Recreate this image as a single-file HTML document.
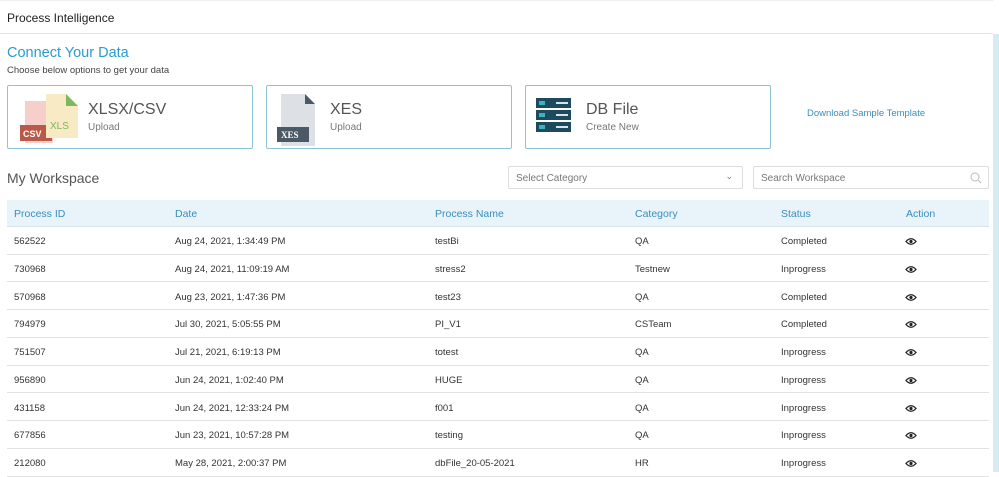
<!DOCTYPE html>
<html><head><style>
*{margin:0;padding:0;box-sizing:border-box}
body{width:999px;height:472px;overflow:hidden;background:#fff;font-family:"Liberation Sans",sans-serif;position:relative;color:#333}
.top{position:absolute;left:0;top:0;width:993px;height:34px;border-bottom:1px solid #e3e6ea;border-top:1px solid #eee}
.top span{position:absolute;left:7px;top:10px;font-size:12px;color:#222}
.sb{position:absolute;left:993px;top:34px;width:6px;height:438px;background:#d6ebf3}
.h1{position:absolute;left:7px;top:45px;font-size:14.5px;color:#2c9ccf}
.sub{position:absolute;left:7px;top:65px;font-size:9.5px;color:#444}
.card{position:absolute;top:85px;width:246px;height:64px;border:1px solid #8cc3d6;border-radius:2px}
.card .t{position:absolute;top:15px;font-size:16px;color:#555}
.card .s{position:absolute;top:36px;font-size:10px;color:#777}
.dl{position:absolute;left:807px;top:108px;font-size:9.5px;color:#3a8dbb}
.ws{position:absolute;left:7px;top:170px;font-size:14px;color:#555}
.inp{position:absolute;top:166px;height:23px;border:1px solid #ddd;border-radius:2px;font-size:10px;color:#777;padding:6px 7px}
.thead{position:absolute;left:7px;top:200px;width:982px;height:27px;background:#e8f4fa;border-bottom:1px solid #d5e6ee}
.c{position:absolute;font-size:10.5px}
.thead .c{top:8px;color:#3a8dbb}
.row{position:absolute;left:7px;width:982px;height:27.7px;border-bottom:1px solid #e2e2e2}
.row .c{top:9px;font-size:9.5px;color:#333}
</style></head><body>
<div class="top"><span>Process Intelligence</span></div>
<div class="sb"></div>
<div class="h1">Connect Your Data</div>
<div class="sub">Choose below options to get your data</div>
<div class="card" style="left:7px">
<svg style="position:absolute;left:10px;top:7px" width="64" height="52"><rect x="7" y="8" width="28" height="42" fill="#f6cfcb"/><rect x="2" y="32" width="32" height="16" fill="#b85a48"/><text x="5" y="44" font-size="9" fill="#fff" font-weight="bold" font-family="Liberation Sans">CSV</text><path d="M28 1h20l12 12v32h-32z" fill="#f7eac4"/><path d="M48 1l12 12h-12z" fill="#7cb85c"/><text x="32" y="36" font-size="10" fill="#7cb85c" font-family="Liberation Sans">XLS</text></svg>
<div class="t" style="left:80px">XLSX/CSV</div><div class="s" style="left:80px">Upload</div></div>
<div class="card" style="left:266px">
<svg style="position:absolute;left:10px;top:7px" width="40" height="54"><path d="M4 1h24l10 10v42h-34z" fill="#dde1e6"/><path d="M28 1l10 10h-10z" fill="#4b5966"/><rect x="0" y="34" width="32" height="15" fill="#4b5966"/><text x="4" y="45" font-size="9" fill="#fff" font-weight="bold" font-family="Liberation Serif">XES</text></svg>
<div class="t" style="left:63px">XES</div><div class="s" style="left:63px">Upload</div></div>
<div class="card" style="left:525px">
<svg style="position:absolute;left:10px;top:12px" width="36" height="36"><g fill="#1e4a5e"><rect y="0" width="35" height="10"/><rect y="12" width="35" height="10"/><rect y="24" width="35" height="10"/></g><g fill="#3bb3c7"><rect x="3" y="3" width="6" height="4"/><rect x="3" y="15" width="6" height="4"/><rect x="3" y="27" width="6" height="4"/></g><g fill="#d8e4ea"><rect x="20" y="4" width="12" height="2"/><rect x="20" y="16" width="12" height="2"/><rect x="20" y="28" width="12" height="2"/></g></svg>
<div class="t" style="left:60px">DB File</div><div class="s" style="left:60px">Create New</div></div>
<div class="dl">Download Sample Template</div>
<div class="ws">My Workspace</div>
<div class="inp" style="left:508px;width:235px">Select Category<span style="position:absolute;right:9px;top:4px;font-size:9px">&#8964;</span></div>
<div class="inp" style="left:753px;width:236px">Search Workspace<svg style="position:absolute;right:6px;top:5px" width="12" height="12"><circle cx="5" cy="5" r="4" fill="none" stroke="#bbb"/><path d="M8 8l3 3" stroke="#bbb"/></svg></div>
<div class="thead"><span class="c" style="left:7px">Process ID</span><span class="c" style="left:168px">Date</span><span class="c" style="left:428px">Process Name</span><span class="c" style="left:628px">Category</span><span class="c" style="left:774px">Status</span><span class="c" style="left:899px">Action</span></div>
<div id="rows"></div>
<script>
var d=[["562522","Aug 24, 2021, 1:34:49 PM","testBi","QA","Completed"],["730968","Aug 24, 2021, 11:09:19 AM","stress2","Testnew","Inprogress"],["570968","Aug 23, 2021, 1:47:36 PM","test23","QA","Completed"],["794979","Jul 30, 2021, 5:05:55 PM","PI_V1","CSTeam","Completed"],["751507","Jul 21, 2021, 6:19:13 PM","totest","QA","Inprogress"],["956890","Jun 24, 2021, 1:02:40 PM","HUGE","QA","Inprogress"],["431158","Jun 24, 2021, 12:33:24 PM","f001","QA","Inprogress"],["677856","Jun 23, 2021, 10:57:28 PM","testing","QA","Inprogress"],["212080","May 28, 2021, 2:00:37 PM","dbFile_20-05-2021","HR","Inprogress"]];
var h="",x=[7,168,428,628,774];
d.forEach(function(r,i){h+='<div class="row" style="top:'+(227+i*27.75)+'px">';r.forEach(function(v,j){h+='<span class="c" style="left:'+x[j]+'px">'+v+'</span>'});h+='<svg style="position:absolute;left:898px;top:10px" width="12" height="9"><path d="M1 4.5Q6 -1 11 4.5Q6 10 1 4.5z" fill="none" stroke="#222" stroke-width="1.3"/><circle cx="6" cy="4.5" r="1.6" fill="#222"/></svg></div>'});
document.getElementById("rows").innerHTML=h;
</script>
</body></html>
